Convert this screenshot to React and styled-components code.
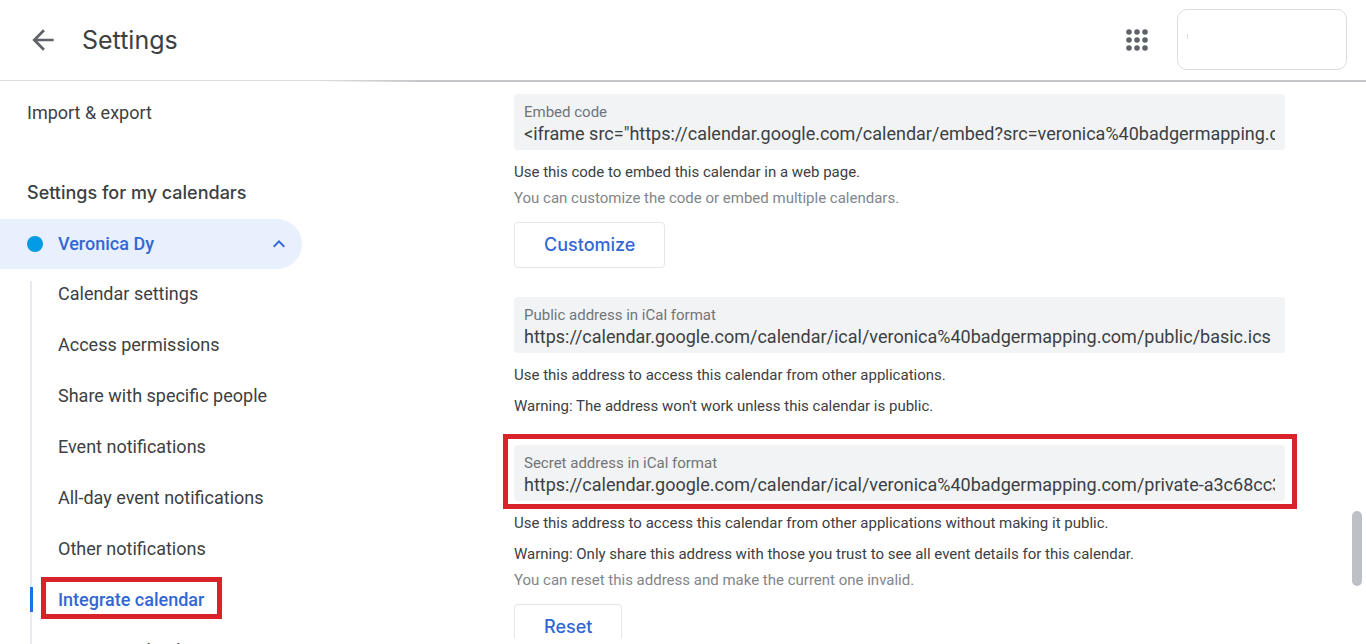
import React from "react";
import styled, { createGlobalStyle } from "styled-components";

const GlobalStyle = createGlobalStyle`
  * {
    box-sizing: border-box;
  }

  body {
    margin: 0;
    background: #fff;
    color: #3c4043;
    font-family: Roboto, "Liberation Sans", sans-serif;
  }
`;

const Page = styled.div`
  height: 100vh;
  display: flex;
  flex-direction: column;
  overflow: hidden;
`;

const Header = styled.header`
  position: relative;
  flex: none;
  display: flex;
  align-items: center;
  height: 81px;
  padding: 0 19px 1px 27px;
  border-bottom: 1px solid #dadce0;

  /* scroll shadow, only over the content column */
  &::after {
    content: "";
    position: absolute;
    top: 80px;
    left: 320px;
    right: 0;
    height: 2px;
    background: linear-gradient(to right, transparent, #c6c7ca 100px);
  }
`;

const IconButton = styled.button`
  display: flex;
  padding: 0;
  border: none;
  background: none;
  color: #5f6368;
  cursor: pointer;
`;

const Title = styled.h1`
  flex: 1;
  margin: 0 0 0 23px;
  font-family: Inter, Roboto, sans-serif;
  font-size: 25px;
  line-height: 32px;
  font-weight: 400;
`;

const AccountBox = styled.button`
  width: 170px;
  height: 61px;
  margin-left: 28px;
  padding: 0 9px 10px;
  border: 1px solid #dadce0;
  border-radius: 10px;
  background: #fff;
  text-align: left;
`;

const Caret = styled.span`
  display: inline-block;
  width: 1px;
  height: 5px;
  background: #dadce0;
`;

const Body = styled.div`
  flex: 1;
  min-height: 0;
  display: flex;
`;

const Sidebar = styled.nav`
  flex: none;
  width: 302px;
  padding-top: 20px;
`;

const TopLink = styled.a`
  display: block;
  padding-left: 27px;
  font-size: 18px;
  line-height: 24px;
  color: inherit;
  text-decoration: none;
`;

const SidebarHeading = styled.h2`
  margin: 56px 0 14px;
  padding-left: 27px;
  font-family: Inter, Roboto, sans-serif;
  font-size: 18px;
  line-height: 24px;
  font-weight: 500;
`;

const CalendarToggle = styled.button`
  display: flex;
  align-items: center;
  width: 100%;
  height: 50px;
  padding: 0 11px 0 27px;
  border: none;
  border-radius: 0 25px 25px 0;
  background: #e8f0fe;
  color: #3367d6;
  font: 500 18px/24px Roboto, sans-serif;
  text-align: left;
  cursor: pointer;
`;

const Dot = styled.span`
  width: 16px;
  height: 16px;
  margin-right: 15px;
  border-radius: 50%;
  background: #039be5;
`;

const ToggleName = styled.span`
  flex: 1;
`;

const SubList = styled.ul`
  margin: 12px 0 0 30px;
  padding: 0;
  border-left: 2px solid #e8eaed;
  list-style: none;
`;

const SubItem = styled.li`
  display: flex;
  height: 51px;
  align-items: flex-start;
`;

const SubLink = styled.a`
  position: relative;
  margin-left: -2px;
  padding-left: 25px;
  border-left: 3px solid ${(p) => (p.$active ? "#1a73e8" : "transparent")};
  color: ${(p) => (p.$active ? "#3367d6" : "inherit")};
  font-size: 18px;
  line-height: 25px;
  font-weight: ${(p) => (p.$active ? 500 : 400)};
  text-decoration: none;

  &::after {
    content: ${(p) => (p.$active ? '""' : "none")};
    position: absolute;
    inset: -10px -18px -7px 8px;
    border: 5px solid #d9232b;
  }
`;

/* clipped at the bottom only, the highlight frame sticks out sideways */
const Main = styled.main`
  flex: 1;
  min-width: 0;
  margin: 0 67px 6px 212px;
  padding-top: 13px;
  clip-path: inset(0 -20px);
`;

const Section = styled.section`
  margin-bottom: 29px;
`;

const Field = styled.label`
  position: relative;
  display: block;
  height: 56px;
  margin-bottom: 12px;
  padding: 8px 10px 0;
  border-radius: 4px;
  background: #f1f3f4;

  &::after {
    content: ${(p) => (p.$highlighted ? '""' : "none")};
    position: absolute;
    inset: -11px -12px -8px -11px;
    border: 5px solid #d9232b;
  }
`;

const FieldLabel = styled.span`
  display: block;
  font-size: 15px;
  line-height: 20px;
  color: #70757a;
`;

const FieldInput = styled.input`
  display: block;
  width: 100%;
  height: 24px;
  padding: 0;
  border: none;
  outline: none;
  background: none;
  color: #3c4043;
  font: 400 18px/24px Roboto, sans-serif;
`;

const Note = styled.p`
  margin: ${(p) => (p.$muted ? 6 : 11)}px 0 0;
  font-size: 15px;
  line-height: 20px;
  color: ${(p) => (p.$muted ? "#80868b" : "#3c4043")};
`;

const OutlineButton = styled.button`
  display: block;
  height: 46px;
  margin-top: 14px;
  padding: 0 29px;
  border: 1px solid #e4e6e9;
  border-radius: 4px;
  background: #fff;
  color: #3367d6;
  font: 500 18px/24px Inter, Roboto, sans-serif;
  cursor: pointer;
`;

const ScrollTrack = styled.div`
  flex: none;
  width: 14px;
  padding-top: 430px;
`;

const ScrollThumb = styled.div`
  width: 10px;
  height: 75px;
  border-radius: 5px;
  background: #bdc1c6;
`;

const links = [
  "Calendar settings",
  "Access permissions",
  "Share with specific people",
  "Event notifications",
  "All-day event notifications",
  "Other notifications",
  "Integrate calendar",
  "Remove calendar",
];

const sections = [
  {
    label: "Embed code",
    value:
      '<iframe src="https://calendar.google.com/calendar/embed?src=veronica%40badgermapping.com',
    notes: [
      { text: "Use this code to embed this calendar in a web page." },
      {
        text: "You can customize the code or embed multiple calendars.",
        muted: true,
      },
    ],
    action: "Customize",
  },
  {
    label: "Public address in iCal format",
    value:
      "https://calendar.google.com/calendar/ical/veronica%40badgermapping.com/public/basic.ics",
    notes: [
      { text: "Use this address to access this calendar from other applications." },
      { text: "Warning: The address won't work unless this calendar is public." },
    ],
  },
  {
    label: "Secret address in iCal format",
    value:
      "https://calendar.google.com/calendar/ical/veronica%40badgermapping.com/private-a3c68cc35",
    highlighted: true,
    notes: [
      {
        text: "Use this address to access this calendar from other applications without making it public.",
      },
      {
        text: "Warning: Only share this address with those you trust to see all event details for this calendar.",
      },
      {
        text: "You can reset this address and make the current one invalid.",
        muted: true,
      },
    ],
    action: "Reset",
  },
];

function BackIcon() {
  return (
    <svg width="32" height="32" viewBox="0 0 24 24" fill="currentColor">
      <path d="M20 11H7.83l5.59-5.59L12 4l-8 8 8 8 1.41-1.41L7.83 13H20v-2z" />
    </svg>
  );
}

function AppsIcon() {
  return (
    <svg width="24" height="24" viewBox="0 0 24 24" fill="currentColor">
      {[4, 12, 20].map((y) =>
        [4, 12, 20].map((x) => <circle key={`${x}-${y}`} cx={x} cy={y} r="2.8" />)
      )}
    </svg>
  );
}

function ChevronUp() {
  return (
    <svg width="24" height="24" viewBox="0 0 24 24" fill="currentColor">
      <path d="M12 8l-6 6 1.41 1.41L12 10.83l4.59 4.58L18 14z" />
    </svg>
  );
}

export default function App() {
  return (
    <Page>
      <GlobalStyle />
      <Header>
        <IconButton aria-label="Go back">
          <BackIcon />
        </IconButton>
        <Title>Settings</Title>
        <IconButton aria-label="Google apps">
          <AppsIcon />
        </IconButton>
        <AccountBox aria-label="Account">
          <Caret />
        </AccountBox>
      </Header>
      <Body>
        <Sidebar>
          <TopLink href="#import">Import &amp; export</TopLink>
          <SidebarHeading>Settings for my calendars</SidebarHeading>
          <CalendarToggle aria-expanded="true">
            <Dot />
            <ToggleName>Veronica Dy</ToggleName>
            <ChevronUp />
          </CalendarToggle>
          <SubList>
            {links.map((link) => (
              <SubItem key={link}>
                <SubLink href="#calendar" $active={link === "Integrate calendar"}>
                  {link}
                </SubLink>
              </SubItem>
            ))}
          </SubList>
        </Sidebar>
        <Main>
          {sections.map((s) => (
            <Section key={s.label}>
              <Field $highlighted={s.highlighted}>
                <FieldLabel>{s.label}</FieldLabel>
                <FieldInput type="text" readOnly value={s.value} />
              </Field>
              {s.notes.map((n) => (
                <Note key={n.text} $muted={n.muted}>
                  {n.text}
                </Note>
              ))}
              {s.action && <OutlineButton>{s.action}</OutlineButton>}
            </Section>
          ))}
        </Main>
        <ScrollTrack>
          <ScrollThumb />
        </ScrollTrack>
      </Body>
    </Page>
  );
}
